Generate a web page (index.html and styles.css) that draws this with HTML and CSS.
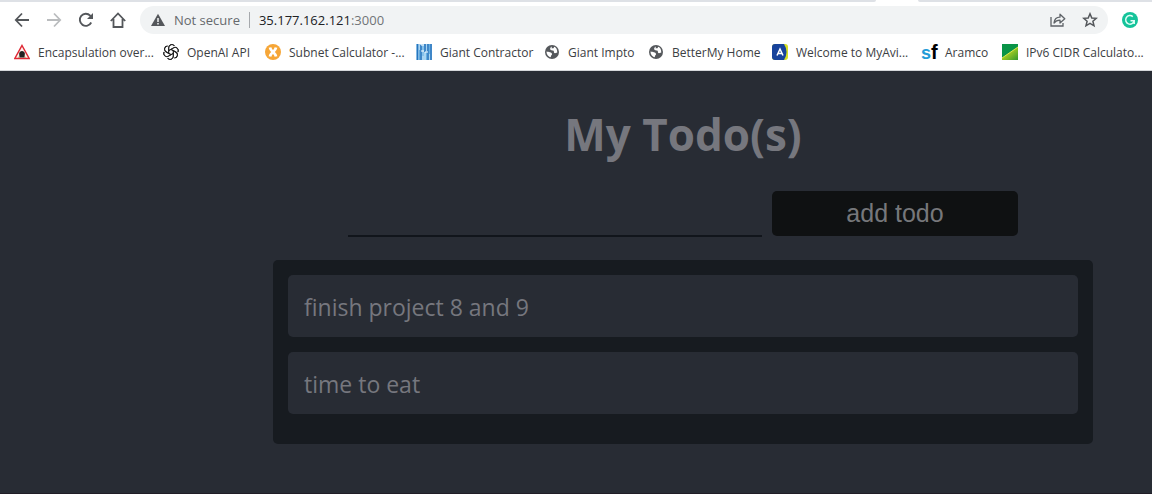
FILE: index.html
```html
<!DOCTYPE html>
<html lang="en">
<head>
<meta charset="utf-8">
<title>My Todo(s)</title>
<link rel="stylesheet" href="styles.css">
</head>
<body>
<header class="browser">
  <div class="tabs"><span class="tab-edge"></span><span class="tab-active"></span><span class="tab-rest"></span></div>
  <div class="toolbar">
    <nav class="nav">
      <button class="icon-btn" aria-label="Back"><svg width="16" height="16" viewBox="0 0 16 16" fill="none" stroke="#54575b" stroke-width="1.800"><path d="M15 8H2M8 1.500L1.800 8L8 14.500"/></svg></button>
      <button class="icon-btn" aria-label="Forward"><svg width="16" height="16" viewBox="0 0 16 16" fill="none" stroke="#babcbe" stroke-width="1.800"><path d="M1 8H14M8 1.500L14.200 8L8 14.500"/></svg></button>
      <button class="icon-btn" aria-label="Reload"><svg width="16" height="16" viewBox="0 0 16 16" fill="none" stroke="#54575b" stroke-width="1.900"><path d="M13.200 10.500A6 6 0 1 1 12.200 3.700L13.500 5"/><path d="M15 1V7H9Z" fill="#54575b" stroke="none"/></svg></button>
      <button class="icon-btn" aria-label="Home"><svg width="16" height="18" viewBox="0 0 16 18" fill="none" stroke="#54575b" stroke-width="1.800"><path d="M.8 10L8 2.500L15.200 10M3.500 8V16H12.500V8"/></svg></button>
    </nav>
    <div class="address">
      <svg width="14" height="14" viewBox="0 0 14 14"><path d="M7 .8L14 13H0Z" fill="#54575b"/><path d="M7 5V9M7 10V11.500" stroke="#f1f3f4" stroke-width="1.500"/></svg>
      <span class="insecure">Not secure</span>
      <span class="divider"></span>
      <span class="url">35.177.162.121<span class="port">:3000</span></span>
      <button class="icon-btn share" aria-label="Share"><svg width="16" height="16" viewBox="0 0 16 16" fill="none" stroke="#5f6368" stroke-width="1.300"><path d="M1 5V14H13V11"/><path d="M4 11C4.500 7 7 5.200 10 5.200V2.200L14.800 6.800L10 11V8.200C7.500 8.200 5.500 9 4 11Z" stroke-linejoin="round"/></svg></button>
      <button class="icon-btn" aria-label="Bookmark"><svg width="16" height="16" viewBox="0 0 16 16" fill="none" stroke="#54575b" stroke-width="1.500"><path d="M8 1.800L9.800 6L14.300 6.300L10.900 9.300L12 13.800L8 11.400L4 13.800L5.100 9.300L1.700 6.300L6.200 6Z"/></svg></button>
    </div>
    <button class="icon-btn" aria-label="Grammarly"><svg width="16" height="16" viewBox="0 0 16 16" fill="none"><circle cx="8" cy="8" r="8" fill="#15c39a"/><path d="M10.800 4.600A4.300 4.300 0 1 0 12.200 8.700H8.500M12.200 8.700V12" stroke="#e2fff7" stroke-width="1.500"/></svg></button>
  </div>
  <nav class="bookmarks">
    <a href="#"><svg width="16" height="16" viewBox="0 0 16 16"><path d="M8 1.500L15.200 14.500H.8Z" fill="#fff3ee" stroke="#df2935" stroke-width="1.500"/><path d="M5.200 13.500V9.500C5.200 6 10.800 6 10.800 9.500V13.500Z" fill="#222"/><path d="M4 14L5.500 11V14ZM12 14L10.500 11V14Z" fill="#c9a878"/></svg><span>Encapsulation over...</span></a>
    <a href="#"><svg width="16" height="16" viewBox="0 0 24 24" fill="none" stroke="#222" stroke-width="1.500"><path id="petal" d="M8.500 14V5.800C8.500 .5 14.500 -.8 17.200 3M8.500 10L15.500 6C20 3.400 24.300 7.800 22.300 12"/><use href="#petal" transform="rotate(60 12 12)"/><use href="#petal" transform="rotate(120 12 12)"/><use href="#petal" transform="rotate(180 12 12)"/><use href="#petal" transform="rotate(240 12 12)"/><use href="#petal" transform="rotate(300 12 12)"/></svg><span>OpenAI API</span></a>
    <a href="#"><svg width="16" height="16" viewBox="0 0 16 16"><circle cx="8" cy="8" r="8" fill="#f6a637"/><path d="M5 3.500C5.500 6 7 7 8 8C9 9 10.500 10 11 12.500M11 3.500C10.500 6 9 7 8 8C7 9 5.500 10 5 12.500" fill="none" stroke="#fff" stroke-width="2.800"/></svg><span>Subnet Calculator -...</span></a>
    <a href="#"><svg width="16" height="16" viewBox="0 0 16 16"><path d="M0 0H16V16H0Z" fill="#a8d4f2"/><path d="M1.500 0V16M5 1V16M9 0V8M12 0V16M15 0V16" stroke="#2674bd" stroke-width="1.600"/><path d="M3.500 6V16M7 0V12M10.500 7V16M13.500 0V10" stroke="#65aee2"/><path d="M5 1H8M5 7H8M9 8H12" stroke="#fff"/></svg><span>Giant Contractor</span></a>
    <a href="#"><svg class="globe" width="14" height="14" viewBox="0 0 14 14"><circle cx="7" cy="7" r="7" fill="#55585c"/><path d="M7 1.600C4.500 2.500 4.500 5.500 7.500 5.500C10 5.500 8 8 10 8.300L12.300 7.500C12.300 4 10.500 2 9.200 1.800L8.500 3.200H6.500ZM1.500 6.500C3.500 7 6.800 7 7 9C7.200 10.500 5.500 10 6 12.300C3.500 12 1.500 9.500 1.500 6.500Z" fill="#fff"/></svg><span>Giant Impto</span></a>
    <a href="#"><svg class="globe" width="14" height="14" viewBox="0 0 14 14"><circle cx="7" cy="7" r="7" fill="#55585c"/><path d="M7 1.600C4.500 2.500 4.500 5.500 7.500 5.500C10 5.500 8 8 10 8.300L12.300 7.500C12.300 4 10.500 2 9.200 1.800L8.500 3.200H6.500ZM1.500 6.500C3.500 7 6.800 7 7 9C7.200 10.500 5.500 10 6 12.300C3.500 12 1.500 9.500 1.500 6.500Z" fill="#fff"/></svg><span>BetterMy Home</span></a>
    <a href="#"><svg width="16" height="16" viewBox="0 0 16 16"><rect width="16" height="16" rx="3" fill="#d5df24"/><path d="M3 0H12Q17 8 12 16H3Q0 16 0 13V3Q0 0 3 0Z" fill="#17439b"/><path d="M5 11.500L8 5L11 11.500M6 9.500H10" fill="none" stroke="#fff" stroke-width="1.500"/></svg><span>Welcome to MyAvi...</span></a>
    <a href="#"><span class="sf" aria-hidden="true"><b>s</b><b class="f">f</b></span><span>Aramco</span></a>
    <a href="#"><svg width="16" height="16" viewBox="0 0 16 16"><defs><linearGradient id="leaf" x1="0" y1="0" x2="1" y2="1"><stop offset="0.400" stop-color="#a8ce21"/><stop offset="1" stop-color="#31982d"/></linearGradient></defs><path d="M0 0H16V16H0Z" fill="#099447"/><path d="M16 3V16H0V14Z" fill="url(#leaf)"/><path d="M0 14L16 3" stroke="#dce94f"/></svg><span>IPv6 CIDR Calculato...</span></a>
  </nav>
</header>
<main class="app">
  <h1 class="title">My Todo(s)</h1>
  <form class="todo-form">
    <input class="todo-input" type="text" aria-label="New todo">
    <button class="add" type="button">add todo</button>
  </form>
  <ul class="todo-list">
    <li>finish project 8 and 9</li>
    <li>time to eat</li>
  </ul>
</main>
</body>
</html>
```
FILE: styles.css
```css
* { box-sizing: border-box; }
body {
  margin: 0;
  min-height: 100vh;
  display: flex;
  flex-direction: column;
  background: #282c34;
  font-family: "Segoe UI", "Open Sans", "Noto Sans", sans-serif;
}
button { border: 0; padding: 0; background: none; }
svg { display: block; flex: none; }

.browser { background: #fff; border-bottom: 1px solid #d5d7da; }
.tabs { display: flex; height: 2px; }
.tab-edge { flex: 876; background: #dee1e6; border-bottom-right-radius: 2px; }
.tab-active { flex: 42; }
.tab-rest { flex: 234; background: #dee1e6; border-bottom-left-radius: 2px; }
.toolbar { display: flex; align-items: center; gap: 14px; padding: 4px 14px 0 14px; }
.nav { display: flex; align-items: center; gap: 16px; width: 112px; }
.icon-btn { flex: none; }
.address {
  flex: 1;
  display: flex;
  align-items: center;
  height: 28px;
  padding: 0 10px 0 11px;
  border-radius: 14px;
  background: #f1f3f4;
  font-size: 13px;
}
.insecure { margin-left: 9px; color: #66696d; white-space: nowrap; }
.divider { width: 1px; height: 16px; margin: 0 9px; background: #a6a9ad; }
.url { flex: 1; color: #202124; }
.port { color: #707377; }
.share { margin-right: 16px; }
.bookmarks {
  display: grid;
  grid-template-columns: 149fr 102fr 151fr 128fr 104fr 124fr 149fr 81fr 150fr;
  align-items: center;
  height: 36px;
  padding-left: 14px;
}
.bookmarks a {
  display: flex;
  align-items: center;
  gap: 8px;
  min-width: 0;
  color: #3c4043;
  font-size: 12px;
  text-decoration: none;
  white-space: nowrap;
}
.globe { margin: 0 1px; }
.sf {
  width: 16px;
  display: flex;
  align-items: baseline;
  font: bold 18px/16px "Liberation Sans", Arial, sans-serif;
  color: #239bd7;
}
.sf .f { color: #000; font-size: 20px; }

.app {
  flex: 1;
  display: flex;
  flex-direction: column;
  align-items: center;
  padding: 33px 0 0 214px;
  border-bottom: 1px solid #201d26;
  color: #76777e;
}
.title { margin: 0; font-size: 44px; line-height: 60px; }
.todo-form { display: flex; gap: 10px; width: 100%; max-width: 670px; margin: 27px 0 23px; }
.todo-input {
  flex: 1;
  min-width: 0;
  height: 46px;
  border: 0;
  border-bottom: 2px solid #11151b;
  background: transparent;
  color: inherit;
  font: 25px "Liberation Sans", Arial, sans-serif;
  outline: 0;
}
.add {
  width: 246px;
  height: 45px;
  border-radius: 5px;
  background: #0f1112;
  color: #76777b;
  font: 25px "Liberation Sans", Arial, sans-serif;
}
.todo-list {
  width: 100%;
  max-width: 820px;
  margin: 0;
  padding: 15px;
  border-radius: 5px;
  background: #171b20;
  list-style: none;
}
.todo-list li {
  margin-bottom: 15px;
  padding: 16px 16px 14px;
  border-radius: 5px;
  background: #282c34;
  font-size: 23px;
  line-height: 32px;
}
```
